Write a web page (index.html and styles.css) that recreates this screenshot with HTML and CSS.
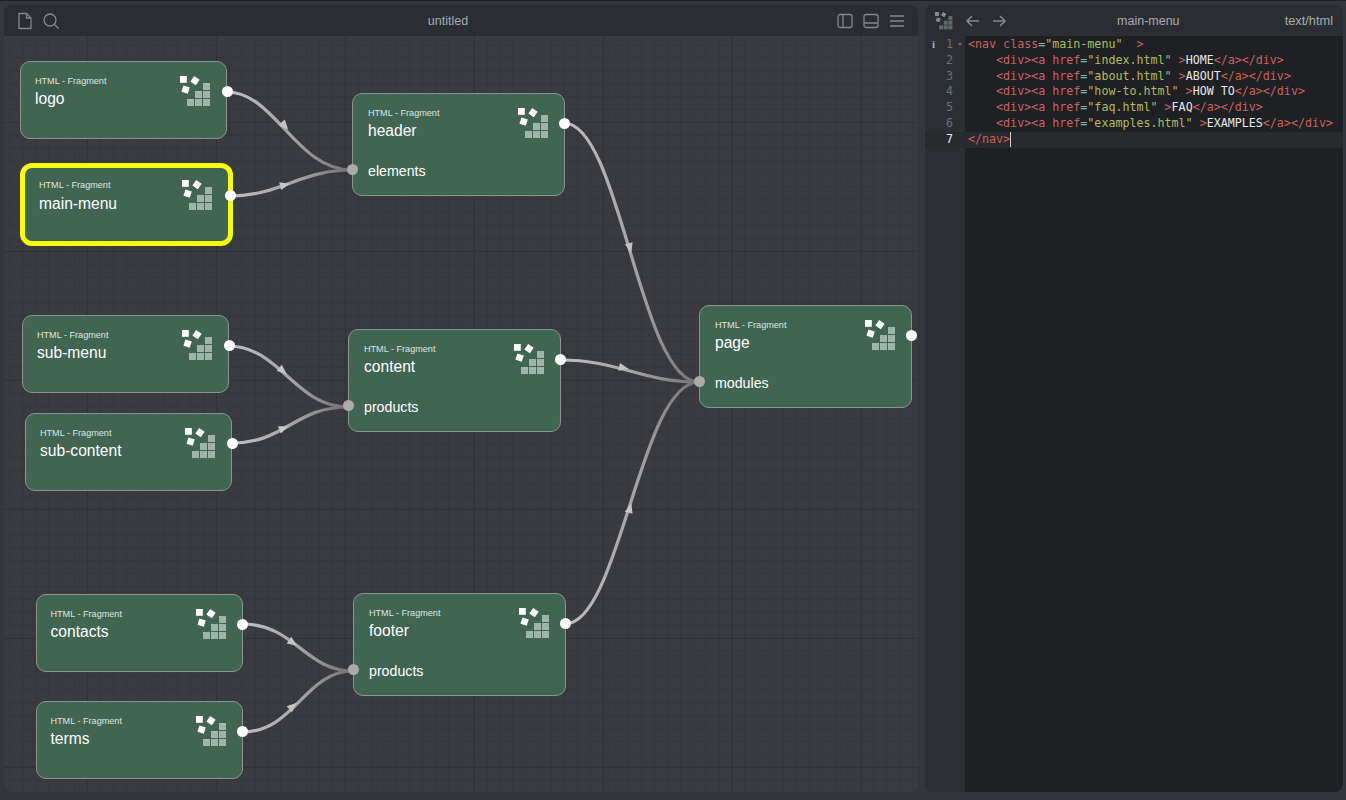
FILE: index.html
```html
<!DOCTYPE html>
<html lang="en">
<head>
<meta charset="utf-8">
<title>untitled</title>
<link rel="stylesheet" href="styles.css">
</head>
<body>
<svg class="defs" width="0" height="0" aria-hidden="true">
  <defs>
    <symbol id="logo" viewBox="0 0 31 31">
      <rect x="0" y="0" width="6.8" height="6.8" fill="#fff"/>
      <rect x="11.7" y="1.3" width="6.6" height="6.6" fill="#fff" transform="rotate(35 15 4.6)"/>
      <rect x="2.3" y="10.3" width="6.6" height="6.6" fill="#fff" transform="rotate(17 5.6 13.6)"/>
      <g fill="#9fb5ab">
        <rect x="7" y="23" width="7" height="7"/>
        <rect x="15" y="23" width="7" height="7"/>
        <rect x="23" y="23" width="7" height="7"/>
        <rect x="15" y="15" width="7" height="7"/>
        <rect x="23" y="15" width="7" height="7"/>
        <rect x="23" y="7" width="7" height="7"/>
      </g>
    </symbol>
    <linearGradient id="w" x1="0" y1="0" x2="1" y2="0">
      <stop offset="0" stop-color="#c0c0c0"/>
      <stop offset="0.55" stop-color="#a2a2a2"/>
      <stop offset="1" stop-color="#707070"/>
    </linearGradient>
  </defs>
</svg>

<div class="app">
  <section class="panel graph">
    <header class="bar graph-bar">
      <div class="tools">
        <svg class="ico" viewBox="0 0 18 18"><path d="M3 1.5h7.5L15 6v10.5H3zM10.5 1.5V6H15"/></svg>
        <svg class="ico" viewBox="0 0 18 18"><circle cx="8" cy="8" r="6"/><path d="M12.5 12.5l4 4"/></svg>
      </div>
      <span class="bar-title">untitled</span>
      <div class="tools">
        <svg class="ico" viewBox="0 0 18 18"><rect x="2" y="2.5" width="14" height="13" rx="2"/><path d="M7 2.5v13"/></svg>
        <svg class="ico" viewBox="0 0 18 18"><rect x="2" y="2.5" width="14" height="13" rx="2"/><path d="M2 11h14"/></svg>
        <svg class="ico" viewBox="0 0 18 18"><path d="M2 4h14M2 9h14M2 14h14"/></svg>
      </div>
    </header>
    <div class="canvas">
      <svg class="wires" viewBox="4 36 914 756" width="914" height="756" aria-hidden="true">
        <g class="wire-lines">
          <path d="M227 92C275 92 296 170 352 170"/>
          <path d="M230 196C280 196 300 170 352 170"/>
          <path d="M564 123C620 123 640 382 699 382"/>
          <path d="M560 360C620 360 640 382 699 382"/>
          <path d="M565 624C620 624 640 382 699 382"/>
          <path d="M228 346C280 346 295 407 348 407"/>
          <path d="M232 443C285 443 295 407 348 407"/>
          <path d="M242 624C295 624 305 671 353 671"/>
          <path d="M242 732C295 732 305 671 353 671"/>
        </g>
        <g class="wire-arrows">
          <path transform="translate(285 126) rotate(50)" d="M-5-4L5 0L-5 4Z"/>
          <path transform="translate(285 185) rotate(-14)" d="M-5-4L5 0L-5 4Z"/>
          <path transform="translate(630 248) rotate(75)" d="M-5-4L5 0L-5 4Z"/>
          <path transform="translate(624 368) rotate(12)" d="M-5-4L5 0L-5 4Z"/>
          <path transform="translate(630 508) rotate(-75)" d="M-5-4L5 0L-5 4Z"/>
          <path transform="translate(283 371) rotate(40)" d="M-5-4L5 0L-5 4Z"/>
          <path transform="translate(284 428) rotate(-22)" d="M-5-4L5 0L-5 4Z"/>
          <path transform="translate(293 643) rotate(35)" d="M-5-4L5 0L-5 4Z"/>
          <path transform="translate(293 706) rotate(-42)" d="M-5-4L5 0L-5 4Z"/>
        </g>
      </svg>

      <article class="node small n-logo">
        <div class="node-head"><div><div class="kind">HTML - Fragment</div><div class="name">logo</div></div><svg class="node-icon"><use href="#logo"/></svg></div>
        <span class="port out"></span>
      </article>
      <article class="node small selected n-main">
        <div class="node-head"><div><div class="kind">HTML - Fragment</div><div class="name">main-menu</div></div><svg class="node-icon"><use href="#logo"/></svg></div>
        <span class="port out"></span>
      </article>
      <article class="node big n-header">
        <div class="node-head"><div><div class="kind">HTML - Fragment</div><div class="name">header</div></div><svg class="node-icon"><use href="#logo"/></svg></div>
        <div class="input">elements</div>
        <span class="port in"></span><span class="port out"></span>
      </article>
      <article class="node small n-submenu">
        <div class="node-head"><div><div class="kind">HTML - Fragment</div><div class="name">sub-menu</div></div><svg class="node-icon"><use href="#logo"/></svg></div>
        <span class="port out"></span>
      </article>
      <article class="node small n-subcontent">
        <div class="node-head"><div><div class="kind">HTML - Fragment</div><div class="name">sub-content</div></div><svg class="node-icon"><use href="#logo"/></svg></div>
        <span class="port out"></span>
      </article>
      <article class="node big n-content">
        <div class="node-head"><div><div class="kind">HTML - Fragment</div><div class="name">content</div></div><svg class="node-icon"><use href="#logo"/></svg></div>
        <div class="input">products</div>
        <span class="port in"></span><span class="port out"></span>
      </article>
      <article class="node big n-page">
        <div class="node-head"><div><div class="kind">HTML - Fragment</div><div class="name">page</div></div><svg class="node-icon"><use href="#logo"/></svg></div>
        <div class="input">modules</div>
        <span class="port in"></span><span class="port out"></span>
      </article>
      <article class="node small n-contacts">
        <div class="node-head"><div><div class="kind">HTML - Fragment</div><div class="name">contacts</div></div><svg class="node-icon"><use href="#logo"/></svg></div>
        <span class="port out"></span>
      </article>
      <article class="node small n-terms">
        <div class="node-head"><div><div class="kind">HTML - Fragment</div><div class="name">terms</div></div><svg class="node-icon"><use href="#logo"/></svg></div>
        <span class="port out"></span>
      </article>
      <article class="node big n-footer">
        <div class="node-head"><div><div class="kind">HTML - Fragment</div><div class="name">footer</div></div><svg class="node-icon"><use href="#logo"/></svg></div>
        <div class="input">products</div>
        <span class="port in"></span><span class="port out"></span>
      </article>
    </div>
  </section>

  <section class="panel editor">
    <header class="bar editor-bar">
      <div class="tools">
        <svg class="bar-logo"><use href="#logo"/></svg>
        <svg class="ico arrow" viewBox="0 0 18 18"><path d="M15 9H3M8 4L3 9l5 5"/></svg>
        <svg class="ico arrow" viewBox="0 0 18 18"><path d="M3 9h12M10 4l5 5-5 5"/></svg>
      </div>
      <span class="bar-title">main-menu</span>
      <span class="mime">text/html</span>
    </header>
    <div class="code-area">
      <div class="gutter">
        <div class="ln first"><span class="info">i</span><span>1</span><span class="fold"></span></div>
        <div class="ln">2</div>
        <div class="ln">3</div>
        <div class="ln">4</div>
        <div class="ln">5</div>
        <div class="ln">6</div>
        <div class="ln active">7</div>
      </div>
      <pre class="code"><code><span class="line"><i class="t">&lt;nav</i> <i class="t">class</i><i class="e">=</i><i class="s">"main-menu"</i>  <i class="t">&gt;</i></span>
<span class="line">    <i class="t">&lt;div&gt;&lt;a</i> <i class="t">href</i><i class="e">=</i><i class="s">"index.html"</i> <i class="t">&gt;</i>HOME<i class="t">&lt;/a&gt;&lt;/div&gt;</i></span>
<span class="line">    <i class="t">&lt;div&gt;&lt;a</i> <i class="t">href</i><i class="e">=</i><i class="s">"about.html"</i> <i class="t">&gt;</i>ABOUT<i class="t">&lt;/a&gt;&lt;/div&gt;</i></span>
<span class="line">    <i class="t">&lt;div&gt;&lt;a</i> <i class="t">href</i><i class="e">=</i><i class="s">"how-to.html"</i> <i class="t">&gt;</i>HOW TO<i class="t">&lt;/a&gt;&lt;/div&gt;</i></span>
<span class="line">    <i class="t">&lt;div&gt;&lt;a</i> <i class="t">href</i><i class="e">=</i><i class="s">"faq.html"</i> <i class="t">&gt;</i>FAQ<i class="t">&lt;/a&gt;&lt;/div&gt;</i></span>
<span class="line">    <i class="t">&lt;div&gt;&lt;a</i> <i class="t">href</i><i class="e">=</i><i class="s">"examples.html"</i> <i class="t">&gt;</i>EXAMPLES<i class="t">&lt;/a&gt;&lt;/div&gt;</i></span>
<span class="line active"><i class="t">&lt;/nav&gt;</i><b class="caret"></b></span></code></pre>
    </div>
  </section>
</div>
</body>
</html>
```

FILE: styles.css
```css
* { box-sizing: border-box; }
html, body { margin: 0; height: 100%; }
body {
  background: #33363c;
  font-family: "Liberation Sans", Arial, sans-serif;
  overflow: hidden;
}
.defs { position: absolute; }
.app {
  display: flex;
  height: 800px;
  padding: 4px 3px 8px 4px;
  gap: 7px;
  border-top: 1px solid #1f2023;
}
.panel {
  display: flex;
  flex-direction: column;
  border-radius: 8px;
  overflow: hidden;
}
.graph { width: 914px; }
.editor { width: 418px; background: #1e2023; }
.bar {
  height: 31px;
  flex: none;
  display: flex;
  align-items: center;
  justify-content: space-between;
  background: #2b2d32;
}
.graph-bar { padding: 0 12px; }
.editor-bar { padding: 0 10px; }
.editor-bar .tools { margin-right: 4px; }
.tools { display: flex; align-items: center; gap: 8px; }
.ico {
  width: 18px;
  height: 18px;
  fill: none;
  stroke: #85878b;
  stroke-width: 1.3;
}
.arrow { stroke-width: 1.5; }
.bar-title { font-size: 12.5px; color: #a9abae; }
.mime { font-size: 12.8px; color: #a9abae; }
.bar-logo { width: 18px; height: 18px; opacity: .45; margin-right: 3px; }

.canvas {
  position: relative;
  flex: 1;
  background-color: #3a3b40;
  background-image:
    linear-gradient(90deg, #313237 1px, transparent 1px),
    linear-gradient(#313237 1px, transparent 1px),
    linear-gradient(90deg, #35363b 1px, transparent 1px),
    linear-gradient(#35363b 1px, transparent 1px);
  background-size: 129px 129px, 129px 129px, 12.9px 12.9px, 12.9px 12.9px;
  background-position: 83px 0, 0 86px, 5.6px 0, 0 8.6px;
}
.wires { position: absolute; inset: 0; }
.wire-lines path { fill: none; stroke: url(#w); stroke-width: 3.2; }
.wire-arrows path { fill: #c4c4c4; }

.node {
  position: absolute;
  background: #416553;
  border: 1.5px solid #8a9590;
  border-radius: 10px;
  color: #fff;
  padding: 14px 14px 0;
}
.small { width: 207px; height: 78px; }
.big { width: 213px; height: 103px; padding-left: 15px; }
.selected {
  width: 213px;
  height: 83px;
  border: 5.5px solid #f4ff10;
  border-radius: 12px;
  padding: 12px 14px 0;
}
.node-head { display: flex; justify-content: space-between; }
.node-icon { width: 31px; height: 31px; margin-right: 1px; flex: none; }
.kind { font-size: 9.1px; line-height: 11px; color: #dfe5e1; }
.name { font-size: 15.6px; line-height: 18px; margin-top: 3px; }
.selected .name { margin-top: 4px; }
.input { font-size: 14.2px; line-height: 16px; margin-top: 22.5px; }

.port {
  position: absolute;
  width: 11px;
  height: 11px;
  border-radius: 50%;
}
.out { background: #fff; right: -6.5px; top: 24px; }
.big .out { right: -5.5px; }
.in { background: #aaa; left: -6.5px; top: 70px; }
.selected .out { right: -8px; top: 22px; }

.n-logo { left: 16px; top: 25px; }
.n-main { left: 16px; top: 127px; }
.n-header { left: 348px; top: 57px; }
.n-submenu { left: 18px; top: 279px; }
.n-subcontent { left: 21px; top: 377px; }
.n-content { left: 344px; top: 293px; }
.n-page { left: 695px; top: 269px; }
.n-contacts { left: 31.5px; top: 558px; }
.n-terms { left: 31.5px; top: 665px; }
.n-footer { left: 349px; top: 557px; }

.code-area {
  flex: 1;
  display: flex;
  font-family: "DejaVu Sans Mono", "Liberation Mono", monospace;
  font-size: 11.67px;
  line-height: 15.8px;
}
.gutter {
  width: 40px;
  flex: none;
  background: #2b2e33;
  color: #6d6f73;
  padding-top: 1px;
}
.ln { height: 15.8px; padding-right: 12px; text-align: right; }
.ln.first { position: relative; }
.ln.active { background: #282a2e; color: #e8e8e8; }
.info { position: absolute; left: 7px; top: 0; font-size: 11px; color: #a8aaac; font-weight: bold; font-family: "Liberation Serif", serif; }
.fold {
  position: absolute;
  right: 3px;
  top: 6px;
  border-left: 2.5px solid transparent;
  border-right: 2.5px solid transparent;
  border-top: 3px solid #6d6f73;
}
.code { margin: 0; flex: 1; padding: 1px 0 0; color: #e6e8e6; font: inherit; min-width: 0; }
.code code { font: inherit; }
.code i { font-style: normal; }
.line { display: inline-block; width: 100%; height: 15.8px; padding-left: 3px; white-space: pre; vertical-align: top; }
.line.active { background: #282a2e; }
.t { color: #c9625f; }
.s { color: #b2bb62; }
.e { color: #7fb8ae; }
.caret { display: inline-block; width: 1px; height: 15px; background: #d0d0d0; vertical-align: top; }
```
